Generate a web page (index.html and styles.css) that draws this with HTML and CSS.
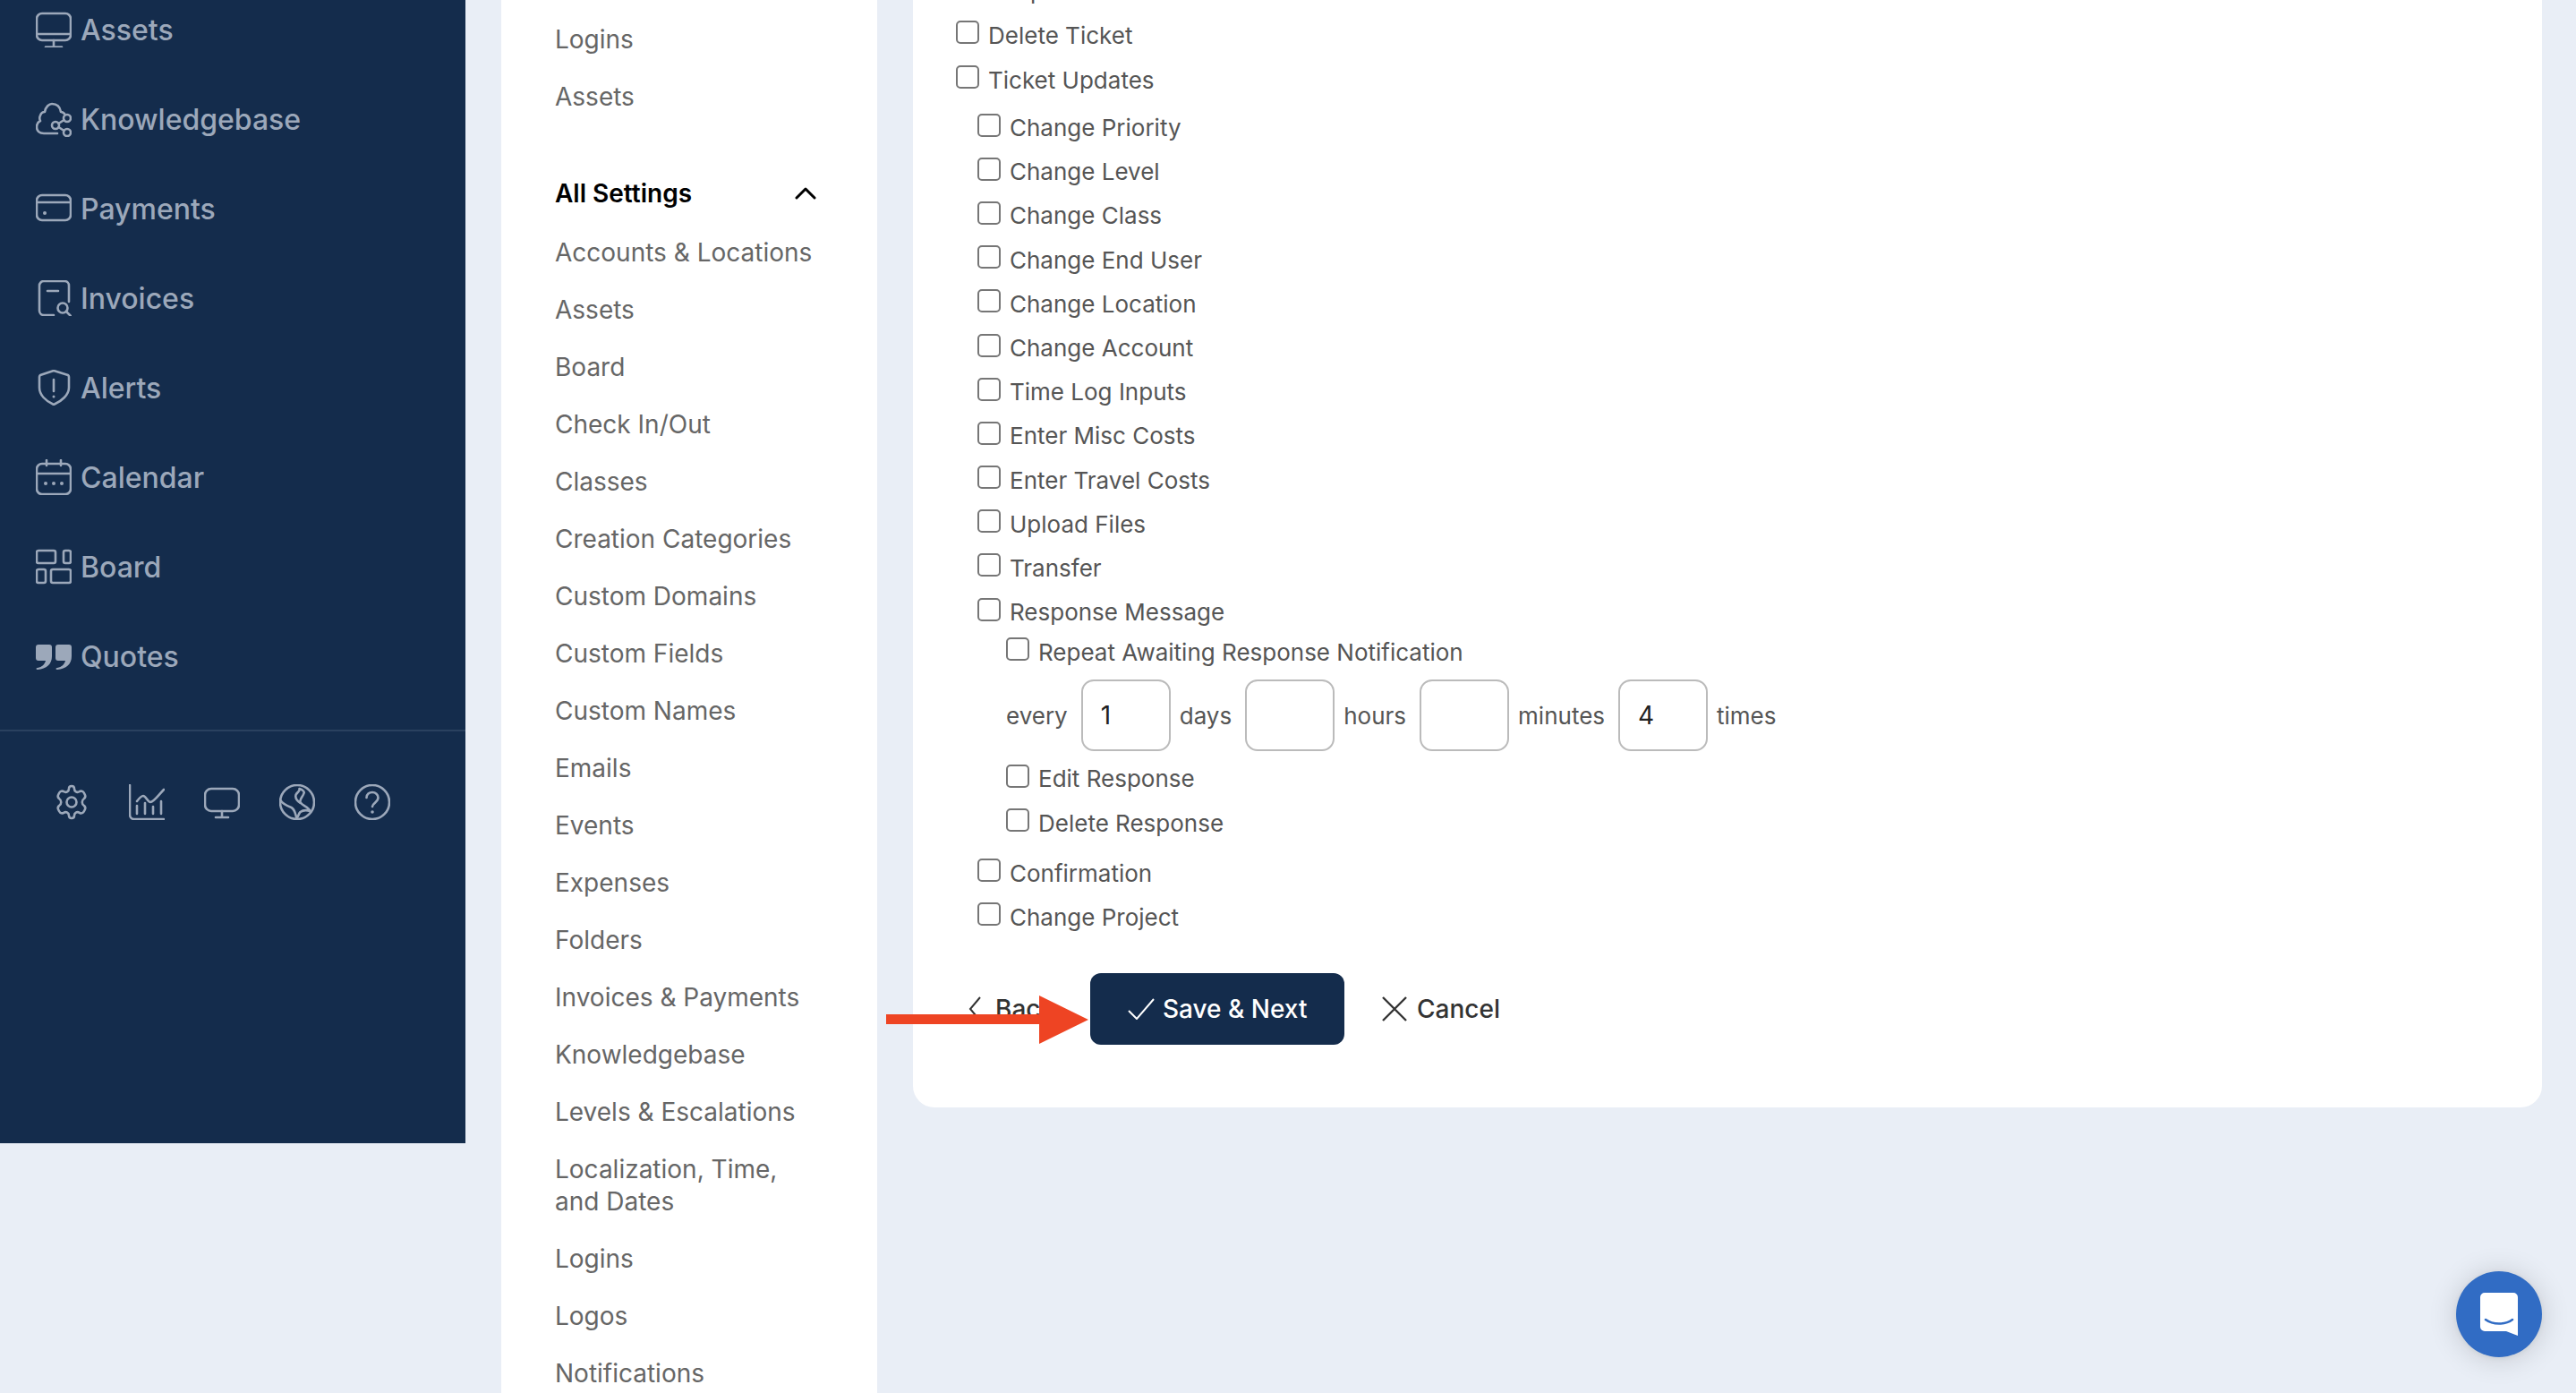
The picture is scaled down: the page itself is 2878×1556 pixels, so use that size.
FILE: index.html
```html
<!DOCTYPE html>
<html lang="en">
<head>
<meta charset="utf-8">
<title>Ticket Permissions</title>
<link rel="stylesheet" href="styles.css">
</head>
<body>
<div class="app">
  <aside class="sidebar">
    <nav class="main-nav">
      <a class="main-link"><svg class="nav-icon" viewBox="0 0 40 40"><rect x="1" y="2" width="38" height="30" rx="6"/><path d="M1 25h38M20 32v7M11 39.500h18"/></svg><span>Assets</span></a>
      <a class="main-link"><svg class="nav-icon" viewBox="0 0 40 40"><path d="M24 36H9c-5 0-8-3-8-7 0-3 2-6 4-7-1-2-1-4 0-6 1-3 3-4 5-4 1-6 5-9 8-9 5 0 9 3 10 9 2 0 3 1 4 2"/><circle cx="35" cy="19" r="4"/><circle cx="22" cy="27" r="4"/><circle cx="35" cy="35" r="4"/><path d="M25.500 25 31.500 21M25.500 29l6 4"/></svg><span>Knowledgebase</span></a>
      <a class="main-link"><svg class="nav-icon" viewBox="0 0 40 40"><rect x="1" y="5" width="38" height="28" rx="6"/><path d="M1 13h38"/><circle class="dot" cx="10" cy="25" r="2"/></svg><span>Payments</span></a>
      <a class="main-link"><svg class="nav-icon" viewBox="0 0 40 40"><path d="M20 39H9a5 5 0 0 1-5-5V6a5 5 0 0 1 5-5h23a5 5 0 0 1 5 5v18M13 12h12"/><circle cx="30" cy="31" r="5.500"/><path d="m34 35 5 5"/></svg><span>Invoices</span></a>
      <a class="main-link"><svg class="nav-icon" viewBox="0 0 40 40"><path d="M20 1 36 6c1 1 1 1 1 2v12c0 8-8 15-17 19C11 35 4 28 4 20V8c0-1 0-1 1-2z"/><path d="M20 11v13"/><circle class="dot" cx="20" cy="30" r="1.500"/></svg><span>Alerts</span></a>
      <a class="main-link"><svg class="nav-icon" viewBox="0 0 40 40"><rect x="1" y="5" width="38" height="34" rx="6"/><path d="M1 16h38M12 1v6M28 1v6"/><circle class="dot" cx="11" cy="27" r="2"/><circle class="dot" cx="20" cy="27" r="2"/><circle class="dot" cx="29" cy="27" r="2"/></svg><span>Calendar</span></a>
      <a class="main-link"><svg class="nav-icon" viewBox="0 0 40 40"><rect x="1" y="2" width="21" height="14" rx="2"/><rect x="31" y="2" width="8" height="14" rx="2"/><rect x="1" y="23" width="10" height="15" rx="2"/><rect x="17" y="23" width="22" height="15" rx="2"/></svg><span>Board</span></a>
      <a class="main-link"><svg class="nav-icon" viewBox="0 0 40 40"><path class="solid" d="M3 7h12c2 0 3 1 3 3v10c0 9-6 14-16 15 -2 0-2-2 0-2 5-1 8-4 9-8H3c-2 0-3-1-3-3V10c0-2 1-3 3-3zM25 7h12c2 0 3 1 3 3v10c0 9-6 14-16 15-2 0-2-2 0-2 5-1 8-4 9-8h-8c-2 0-3-1-3-3V10c0-2 1-3 3-3z"/></svg><span>Quotes</span></a>
    </nav>
    <div class="tool-row">
      <svg class="tool-icon" viewBox="0 0 40 40"><path d="M20 2c2 0 3 1 3 3 0 3 3 5 6 3 2-1 4 0 5 2l1 2c1 2 0 3-1 4-3 2-3 6 0 8 1 1 2 2 1 4l-1 2c-1 2-3 3-5 2-3-2-6 0-6 3 0 2-1 3-3 3s-3-1-3-3c0-3-3-5-6-3-2 1-4 0-5-2l-1-2c-1-2 0-3 1-4 3-2 3-6 0-8-1-1-2-2-1-4l1-2c1-2 3-3 5-2 3 2 6 0 6-3 0-2 1-3 3-3z"/><circle cx="20" cy="20" r="5.500"/></svg>
      <svg class="tool-icon" viewBox="0 0 40 40"><path d="M1 1v33a5 5 0 0 0 5 5h33M9 19c3-4 5-6 7-6 3 0 5 7 8 7 4 0 10-9 15-14M9 24v9M18 21v12M27 25v8M36 19v14"/></svg>
      <svg class="tool-icon" viewBox="0 0 40 40"><rect x="1" y="5" width="38" height="25" rx="7"/><path d="M20 30v6M13 37h14"/></svg>
      <svg class="tool-icon" viewBox="0 0 40 40"><circle cx="20" cy="20" r="19"/><path d="M1.500 18c2 4 7 6 12 8 4 2 4 6 6 12 2-2 2-5 4-7 4-3 8-2 11-1-2-5-9-6-11-10-1-4 3-6 4-10 1-2-2-4-5-5 1 3-3 4-4 7-1 4 2 7 5 9"/></svg>
      <svg class="tool-icon" viewBox="0 0 40 40"><circle cx="20" cy="20" r="19"/><path d="M13.500 15c0-4 3-6 6.500-6s6.500 2.500 6.500 6c0 5-6 5.500-6.500 10"/><circle class="dot" cx="20" cy="31" r="1.800"/></svg>
    </div>
  </aside>

  <nav class="settings-nav">
    <a class="settings-link">Logins</a>
    <a class="settings-link">Assets</a>
    <div class="settings-head"><span>All Settings</span><svg class="chevron" viewBox="0 0 24 14"><path d="M2 12 12 2l10 10"/></svg></div>
    <a class="settings-link">Accounts &amp; Locations</a>
    <a class="settings-link">Assets</a>
    <a class="settings-link">Board</a>
    <a class="settings-link">Check In/Out</a>
    <a class="settings-link">Classes</a>
    <a class="settings-link">Creation Categories</a>
    <a class="settings-link">Custom Domains</a>
    <a class="settings-link">Custom Fields</a>
    <a class="settings-link">Custom Names</a>
    <a class="settings-link">Emails</a>
    <a class="settings-link">Events</a>
    <a class="settings-link">Expenses</a>
    <a class="settings-link">Folders</a>
    <a class="settings-link">Invoices &amp; Payments</a>
    <a class="settings-link">Knowledgebase</a>
    <a class="settings-link">Levels &amp; Escalations</a>
    <a class="settings-link">Localization, Time, and&nbsp;Dates</a>
    <a class="settings-link">Logins</a>
    <a class="settings-link">Logos</a>
    <a class="settings-link">Notifications</a>
  </nav>

  <main class="card">
    <div class="perms">
      <label class="check check-top"><input type="checkbox"><span>Reopen Ticket</span></label>
      <label class="check check-top"><input type="checkbox"><span>Delete Ticket</span></label>
      <label class="check check-top"><input type="checkbox"><span>Ticket Updates</span></label>
      <div class="level-2">
        <label class="check"><input type="checkbox"><span>Change Priority</span></label>
        <label class="check"><input type="checkbox"><span>Change Level</span></label>
        <label class="check"><input type="checkbox"><span>Change Class</span></label>
        <label class="check"><input type="checkbox"><span>Change End User</span></label>
        <label class="check"><input type="checkbox"><span>Change Location</span></label>
        <label class="check"><input type="checkbox"><span>Change Account</span></label>
        <label class="check"><input type="checkbox"><span>Time Log Inputs</span></label>
        <label class="check"><input type="checkbox"><span>Enter Misc Costs</span></label>
        <label class="check"><input type="checkbox"><span>Enter Travel Costs</span></label>
        <label class="check"><input type="checkbox"><span>Upload Files</span></label>
        <label class="check"><input type="checkbox"><span>Transfer</span></label>
        <label class="check"><input type="checkbox"><span>Response Message</span></label>
        <div class="level-3">
          <label class="check check-tight"><input type="checkbox"><span>Repeat Awaiting Response Notification</span></label>
          <div class="repeat-row">
            <span>every</span><input class="num" type="text" value="1">
            <span>days</span><input class="num" type="text">
            <span>hours</span><input class="num" type="text">
            <span>minutes</span><input class="num" type="text" value="4">
            <span>times</span>
          </div>
          <label class="check"><input type="checkbox"><span>Edit Response</span></label>
          <label class="check"><input type="checkbox"><span>Delete Response</span></label>
        </div>
        <label class="check"><input type="checkbox"><span>Confirmation</span></label>
        <label class="check"><input type="checkbox"><span>Change Project</span></label>
      </div>
    </div>
    <div class="actions">
      <a class="btn-back"><svg class="chev-left" viewBox="0 0 14 28"><path d="M13 1 2 14l11 13"/></svg>Back</a>
      <a class="btn-save"><svg class="tick" viewBox="0 0 30 24"><path d="M1 14l9 9L29 1"/></svg>Save &amp; Next</a>
      <a class="btn-cancel"><svg class="cross" viewBox="0 0 28 28"><path d="M1 1l26 26M27 1 1 27"/></svg>Cancel</a>
      <svg class="arrow" viewBox="0 0 226 54"><path d="M0 21h171V0l55 27-55 27V32H0z"/></svg>
    </div>
  </main>
</div>
<button class="chat-fab" type="button" aria-label="Chat"><svg viewBox="0 0 42 48"><path d="M5 0h32a5 5 0 0 1 5 5v43l-13-5H5a5 5 0 0 1-5-5V5a5 5 0 0 1 5-5z"/><path class="smile" d="M6 30c8 6 22 6 30 0"/></svg></button>
</body>
</html>
```
FILE: styles.css
```css
* { box-sizing: border-box; }
html, body { margin: 0; height: 100%; }
body {
  background: #e9eef6;
  font-family: Inter, "Liberation Sans", sans-serif;
  overflow: hidden;
  position: relative;
}
.app { display: flex; align-items: flex-start; height: 1556px; }

.sidebar {
  width: 520px;
  height: 1277px;
  flex: none;
  background: #142c4c;
  color: #9ca8ba;
  overflow: hidden;
}
.main-nav { margin-top: -17px; padding-bottom: 32px; border-bottom: 2px solid #2a415f; }
.main-link {
  display: flex;
  align-items: center;
  height: 100px;
  padding-left: 40px;
  gap: 10px;
  font-size: 32px;
  font-weight: 500;
}
.nav-icon { width: 40px; height: 40px; flex: none; }
.nav-icon, .tool-icon { fill: none; stroke: #9ca8ba; stroke-width: 2.6; stroke-linecap: round; stroke-linejoin: round; }
.nav-icon .dot, .tool-icon .dot { fill: #9ca8ba; stroke: none; }
.nav-icon .solid { fill: #9ca8ba; stroke: none; }
.tool-row { display: flex; gap: 44px; padding: 59px 0 0 60px; }
.tool-icon { width: 40px; height: 40px; flex: none; }

.settings-nav {
  width: 420px;
  margin-left: 40px;
  flex: none;
  height: 1556px;
  background: #fff;
  padding: 12px 61px 0 60px;
  overflow: hidden;
}
.settings-link {
  display: block;
  padding: 14px 0;
  font-size: 28px;
  line-height: 36px;
  color: #666;
}
.settings-head {
  display: flex;
  justify-content: space-between;
  align-items: center;
  margin-top: 41px;
  height: 69px;
  padding-right: 7px;
  font-size: 28px;
  font-weight: 600;
  color: #000;
}
.chevron { width: 24px; height: 14px; fill: none; stroke: #000; stroke-width: 3; stroke-linecap: round; stroke-linejoin: round; }

.card {
  width: 1820px;
  margin-left: 40px;
  flex: none;
  height: 1237px;
  background: #fff;
  border-radius: 0 0 24px 24px;
  padding: 0 0 0 48px;
}
.perms { margin-top: -36px; }
.check {
  display: flex;
  align-items: center;
  height: 49.2px;
  gap: 10px;
  font-size: 26px;
  color: #555;
}
.check-top { height: 50px; }
.check-tight { height: 40px; }
.check input {
  appearance: none;
  width: 26px;
  height: 26px;
  margin: 0 0 6px;
  flex: none;
  background: #fff;
  border: 2px solid #767676;
  border-radius: 5px;
}
.level-2 { padding-left: 24px; margin-top: 4px; }
.level-3 { padding-left: 32px; margin-bottom: 7px; }
.repeat-row {
  display: flex;
  align-items: center;
  height: 80px;
  margin: 11px 0 6px;
  font-size: 26px;
  color: #555;
}
.num {
  width: 100px;
  height: 80px;
  margin: 0 10px 0 15px;
  padding: 0 20px;
  border: 2px solid #bbb;
  border-radius: 14px;
  background: #fff;
  font: 400 28px Inter, "Liberation Sans", sans-serif;
  color: #222;
}

.actions {
  position: relative;
  display: flex;
  align-items: center;
  height: 80px;
  margin-top: 38px;
  font-size: 28px;
  color: #333;
}
.btn-back { display: flex; align-items: center; gap: 16px; width: 150px; padding-left: 14px; font-weight: 500; white-space: nowrap; }
.chev-left { width: 14px; height: 28px; fill: none; stroke: #333; stroke-width: 2; }
.btn-save {
  display: flex;
  align-items: center;
  gap: 9px;
  width: 284px;
  height: 80px;
  padding-left: 42px;
  background: #142c4c;
  color: #fff;
  border-radius: 12px;
  font-weight: 500;
}
.tick { width: 30px; height: 24px; fill: none; stroke: #fff; stroke-width: 2; }
.btn-cancel { display: flex; align-items: center; gap: 11px; margin-left: 42px; font-weight: 500; }
.cross { width: 28px; height: 28px; fill: none; stroke: #333; stroke-width: 2.4; }
.arrow { position: absolute; left: -78px; top: 25px; width: 226px; height: 54px; fill: #ee4423; }

.chat-fab {
  position: absolute;
  left: 2744px;
  top: 1420px;
  width: 96px;
  height: 96px;
  padding: 0;
  border: 0;
  border-radius: 50%;
  background: #316cc4;
  box-shadow: 0 1px 6px rgba(0,0,0,.06), 0 2px 32px rgba(0,0,0,.16);
  display: flex;
  align-items: center;
  justify-content: center;
}
.chat-fab svg { width: 42px; height: 48px; fill: #fff; }
.chat-fab .smile { fill: none; stroke: #316cc4; stroke-width: 2.6; stroke-linecap: round; }
```
